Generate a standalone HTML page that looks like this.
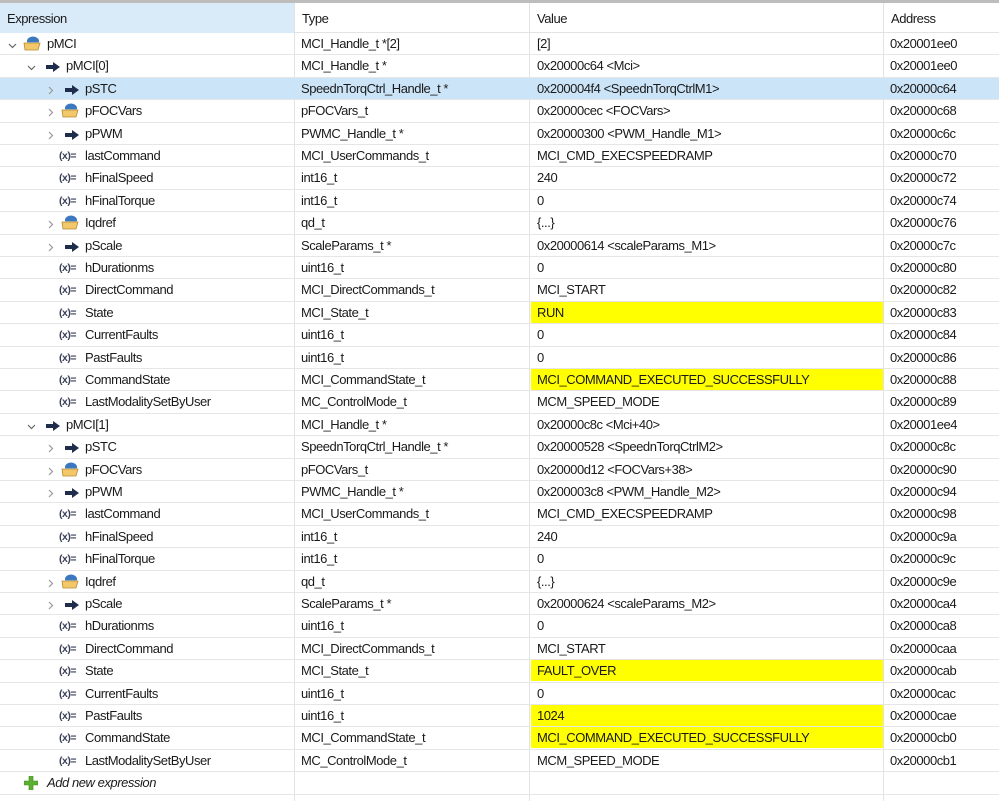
<!DOCTYPE html>
<html><head><meta charset="utf-8"><style>
*{margin:0;padding:0;box-sizing:border-box}
body{width:999px;height:801px;overflow:hidden;background:#fff;font-family:"Segoe UI","Liberation Sans",sans-serif;font-size:13px;letter-spacing:-0.45px;color:#1a1a1a;position:relative}
.top{position:absolute;left:0;top:0;width:999px;height:3px;background:#bdbdbd}
.hdr{position:absolute;top:3px;left:0;width:999px;height:30px;border-bottom:1px solid #e3e3e3}
.hdr div{position:absolute;top:0;height:30px;line-height:32px;padding-left:7px}
.row{position:absolute;left:0;width:999px;height:22.4px;border-bottom:1px solid #e6e6e6}
.row>span{position:absolute;top:0;line-height:22px;white-space:nowrap}
.sel{background:#cce4f7}
.c1{left:301px}.c2{left:537px}.c3{left:890px}
.y{position:absolute;left:531px;width:352px;top:0;height:21px;background:#ffff00}
.vl{position:absolute;top:3px;bottom:0;width:1px;background:#e3e3e3}
.chev{position:absolute;top:5px;width:9px;height:9px}
.ar{position:absolute;top:5px;width:14px;height:10px}
.fo{position:absolute;top:2px;width:18px;height:16px}
.xe{position:absolute;top:0;line-height:21px;font-size:10.5px;color:#3a3f55;font-weight:bold;letter-spacing:-0.5px}
</style></head><body>
<div class="top"></div>
<div class="hdr"><div style="left:0;width:294px;background:#d9eaf9">Expression</div><div style="left:295px">Type</div><div style="left:530px">Value</div><div style="left:884px">Address</div></div>
<div class="vl" style="left:294px"></div><div class="vl" style="left:529px"></div><div class="vl" style="left:883px"></div>
<div id="rows"></div>
<script>
const AR='<svg viewBox="0 0 14 10"><path d="M0 3h7V0l7 5-7 5V7H0z" fill="#1f2d4d"/></svg>';
const FO='<svg viewBox="0 0 18 16"><ellipse cx="10" cy="6" rx="6" ry="4.5" fill="#3c78c0"/><path d="M4 7h12v2H4z" fill="#8ab4e0"/><path d="M1 8h16l-2 7H2z" fill="#f3c86a" stroke="#b88a30" stroke-width="0.8"/></svg>';
const CD='<svg viewBox="0 0 9 9"><path d="M1 3l3.5 3.5L8 3" fill="none" stroke="#666" stroke-width="1.2"/></svg>';
const CR='<svg viewBox="0 0 9 9"><path d="M3 1l3.5 3.5L3 8" fill="none" stroke="#999" stroke-width="1.2"/></svg>';
const d=[
[0,'f','v','pMCI','MCI_Handle_t *[2]','[2]','0x20001ee0'],
[1,'a','v','pMCI[0]','MCI_Handle_t *','0x20000c64 &lt;Mci&gt;','0x20001ee0'],
[2,'a','>','pSTC','SpeednTorqCtrl_Handle_t *','0x200004f4 &lt;SpeednTorqCtrlM1&gt;','0x20000c64','s'],
[2,'f','>','pFOCVars','pFOCVars_t','0x20000cec &lt;FOCVars&gt;','0x20000c68'],
[2,'a','>','pPWM','PWMC_Handle_t *','0x20000300 &lt;PWM_Handle_M1&gt;','0x20000c6c'],
[2,'x','','lastCommand','MCI_UserCommands_t','MCI_CMD_EXECSPEEDRAMP','0x20000c70'],
[2,'x','','hFinalSpeed','int16_t','240','0x20000c72'],
[2,'x','','hFinalTorque','int16_t','0','0x20000c74'],
[2,'f','>','Iqdref','qd_t','{...}','0x20000c76'],
[2,'a','>','pScale','ScaleParams_t *','0x20000614 &lt;scaleParams_M1&gt;','0x20000c7c'],
[2,'x','','hDurationms','uint16_t','0','0x20000c80'],
[2,'x','','DirectCommand','MCI_DirectCommands_t','MCI_START','0x20000c82'],
[2,'x','','State','MCI_State_t','RUN','0x20000c83','y'],
[2,'x','','CurrentFaults','uint16_t','0','0x20000c84'],
[2,'x','','PastFaults','uint16_t','0','0x20000c86'],
[2,'x','','CommandState','MCI_CommandState_t','MCI_COMMAND_EXECUTED_SUCCESSFULLY','0x20000c88','y'],
[2,'x','','LastModalitySetByUser','MC_ControlMode_t','MCM_SPEED_MODE','0x20000c89'],
[1,'a','v','pMCI[1]','MCI_Handle_t *','0x20000c8c &lt;Mci+40&gt;','0x20001ee4'],
[2,'a','>','pSTC','SpeednTorqCtrl_Handle_t *','0x20000528 &lt;SpeednTorqCtrlM2&gt;','0x20000c8c'],
[2,'f','>','pFOCVars','pFOCVars_t','0x20000d12 &lt;FOCVars+38&gt;','0x20000c90'],
[2,'a','>','pPWM','PWMC_Handle_t *','0x200003c8 &lt;PWM_Handle_M2&gt;','0x20000c94'],
[2,'x','','lastCommand','MCI_UserCommands_t','MCI_CMD_EXECSPEEDRAMP','0x20000c98'],
[2,'x','','hFinalSpeed','int16_t','240','0x20000c9a'],
[2,'x','','hFinalTorque','int16_t','0','0x20000c9c'],
[2,'f','>','Iqdref','qd_t','{...}','0x20000c9e'],
[2,'a','>','pScale','ScaleParams_t *','0x20000624 &lt;scaleParams_M2&gt;','0x20000ca4'],
[2,'x','','hDurationms','uint16_t','0','0x20000ca8'],
[2,'x','','DirectCommand','MCI_DirectCommands_t','MCI_START','0x20000caa'],
[2,'x','','State','MCI_State_t','FAULT_OVER','0x20000cab','y'],
[2,'x','','CurrentFaults','uint16_t','0','0x20000cac'],
[2,'x','','PastFaults','uint16_t','1024','0x20000cae','y'],
[2,'x','','CommandState','MCI_CommandState_t','MCI_COMMAND_EXECUTED_SUCCESSFULLY','0x20000cb0','y'],
[2,'x','','LastModalitySetByUser','MC_ControlMode_t','MCM_SPEED_MODE','0x20000cb1']];
let h='';
d.forEach((r,i)=>{const top=33+i*22.4,o=r[0]*19;
let s='<div class="row'+(r[7]=='s'?' sel':'')+'" style="top:'+top+'px">';
if(r[7]=='y')s+='<div class="y"></div>';
if(r[2]=='v')s+='<div class="chev" style="left:'+(8+o)+'px">'+CD+'</div>';
if(r[2]=='>')s+='<div class="chev" style="left:'+(8+o)+'px">'+CR+'</div>';
if(r[1]=='a')s+='<div class="ar" style="left:'+(27+o)+'px">'+AR+'</div>';
if(r[1]=='f')s+='<div class="fo" style="left:'+(23+o)+'px">'+FO+'</div>';
if(r[1]=='x')s+='<span class="xe" style="left:'+(21+o)+'px">(x)=</span>';
s+='<span style="left:'+(47+o)+'px">'+r[3]+'</span><span class="c1">'+r[4]+'</span><span class="c2">'+r[5]+'</span><span class="c3">'+r[6]+'</span></div>';
h+=s;});
h+='<div class="row" style="top:'+(33+33*22.4)+'px"><svg style="position:absolute;left:24px;top:4px" width="14" height="14" viewBox="0 0 14 14"><path d="M5 0h4v5h5v4H9v5H5V9H0V5h5z" fill="#5cb030" stroke="#3a8a20" stroke-width="0.6"/></svg><span style="left:47px;font-style:italic">Add new expression</span></div>';
document.getElementById('rows').innerHTML=h;
</script>
</body></html>
